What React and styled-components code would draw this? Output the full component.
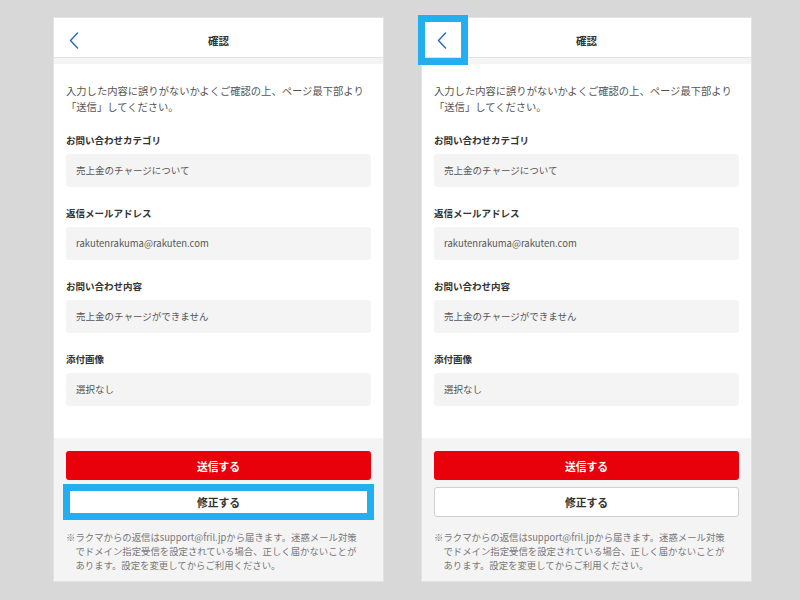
import React from "react";
import { styled, createGlobalStyle } from "styled-components";

const GlobalStyle = createGlobalStyle`
  * {
    margin: 0;
    padding: 0;
    box-sizing: border-box;
  }

  body {
    font-family: "Noto Sans CJK JP", "Liberation Sans", sans-serif;
    background-color: #d8d8d8;
    color: #333;
  }

  button {
    font-family: inherit;
  }
`;

const Stage = styled.main`
  display: flex;
  align-items: flex-start;
  gap: 37px;
  padding: 17px 0 0 53px;
  width: 800px;
  height: 600px;
  overflow: hidden;
`;

const Panel = styled.section`
  width: 331px;
  display: flex;
  flex-direction: column;
  background-color: #f4f4f4;
  border: 1px solid #e3e3e3;
`;

const Header = styled.header`
  display: grid;
  grid-template-columns: 44px 1fr 44px;
  align-items: center;
  height: 40px;
  padding-top: 5px;
  background-color: #ffffff;
  border-bottom: 1px solid #e2e2e2;
`;

const BackButton = styled.button`
  position: relative;
  height: 34px;
  width: 44px;
  border: none;
  background: none;
  display: flex;
  align-items: center;
  padding-left: 15px;
  cursor: pointer;
`;

const Title = styled.h1`
  text-align: center;
  font-size: 10.5px;
  font-weight: 700;
  color: #333;
`;

const Body = styled.div`
  margin-top: 6px;
  background-color: #ffffff;
  padding: 19px 12px 32px;
`;

const Intro = styled.p`
  font-size: 10.3px;
  line-height: 16px;
  color: #555;
  margin-bottom: 18px;
`;

const Section = styled.div`
  & + & {
    margin-top: 19px;
  }
`;

const Label = styled.h2`
  font-size: 9.5px;
  line-height: 14px;
  font-weight: 700;
  color: #333;
  margin-bottom: 7px;
`;

const Value = styled.div`
  height: 33px;
  line-height: 33px;
  padding: 0 10px;
  border-radius: 3px;
  background-color: #f4f4f4;
  font-size: 9.5px;
  color: #555;
`;

const Footer = styled.div`
  padding: 13px 12px 9px;
  display: flex;
  flex-direction: column;
  gap: 7px;
`;

const ActionButton = styled.button`
  position: relative;
  height: ${(p) => (p.$primary ? "29px" : "30px")};
  width: 100%;
  border-radius: 3px;
  border: ${(p) => (p.$primary ? "none" : "1px solid #cfcfcf")};
  background-color: ${(p) => (p.$primary ? "#e8000b" : "#ffffff")};
  color: ${(p) => (p.$primary ? "#ffffff" : "#333")};
  font-size: 10.8px;
  font-weight: 700;
  cursor: pointer;
`;

const Note = styled.p`
  margin-top: 6px;
  font-size: 9.4px;
  line-height: 14px;
  color: #777;
  padding-left: 1em;
  text-indent: -1em;
  white-space: nowrap;
`;

// blue callout frame laid over the element it points at
const Highlight = styled.span`
  position: absolute;
  top: ${(p) => p.$top}px;
  left: ${(p) => p.$left}px;
  width: ${(p) => p.$w};
  height: ${(p) => p.$h};
  border: 7px solid #22aeef;
  pointer-events: none;
`;

const ChevronLeft = () => (
  <svg width="10" height="17" viewBox="0 0 10 17" fill="none">
    <path d="M8.5 1 L1.5 8.5 L8.5 16" stroke="#2b6cc4" strokeWidth="1.5" strokeLinecap="round" strokeLinejoin="round" />
  </svg>
);

const fields = [
  { label: "お問い合わせカテゴリ", value: "売上金のチャージについて" },
  { label: "返信メールアドレス", value: "rakutenrakuma@rakuten.com" },
  { label: "お問い合わせ内容", value: "売上金のチャージができません" },
  { label: "添付画像", value: "選択なし" },
];

const ConfirmScreen = ({ mark }) => (
  <Panel>
    <Header>
      <BackButton aria-label="戻る">
        <ChevronLeft />
        {mark === "back" && <Highlight $top={-8} $left={-4} $w="50px" $h="50px" />}
      </BackButton>
      <Title>確認</Title>
      <span />
    </Header>
    <Body>
      <Intro>入力した内容に誤りがないかよくご確認の上、ページ最下部より「送信」してください。</Intro>
      {fields.map((f) => (
        <Section key={f.label}>
          <Label>{f.label}</Label>
          <Value>{f.value}</Value>
        </Section>
      ))}
    </Body>
    <Footer>
      <ActionButton $primary>送信する</ActionButton>
      <ActionButton>
        修正する
        {mark === "edit" && (
          <Highlight $top={-4} $left={-4} $w="calc(100% + 8px)" $h="calc(100% + 8px)" />
        )}
      </ActionButton>
      <Note>
        ※ラクマからの返信はsupport@fril.jpから届きます。迷惑メール対策
        <br />
        でドメイン指定受信を設定されている場合、正しく届かないことが
        <br />
        あります。設定を変更してからご利用ください。
      </Note>
    </Footer>
  </Panel>
);

export default function App() {
  return (
    <>
      <GlobalStyle />
      <Stage>
        <ConfirmScreen mark="edit" />
        <ConfirmScreen mark="back" />
      </Stage>
    </>
  );
}
